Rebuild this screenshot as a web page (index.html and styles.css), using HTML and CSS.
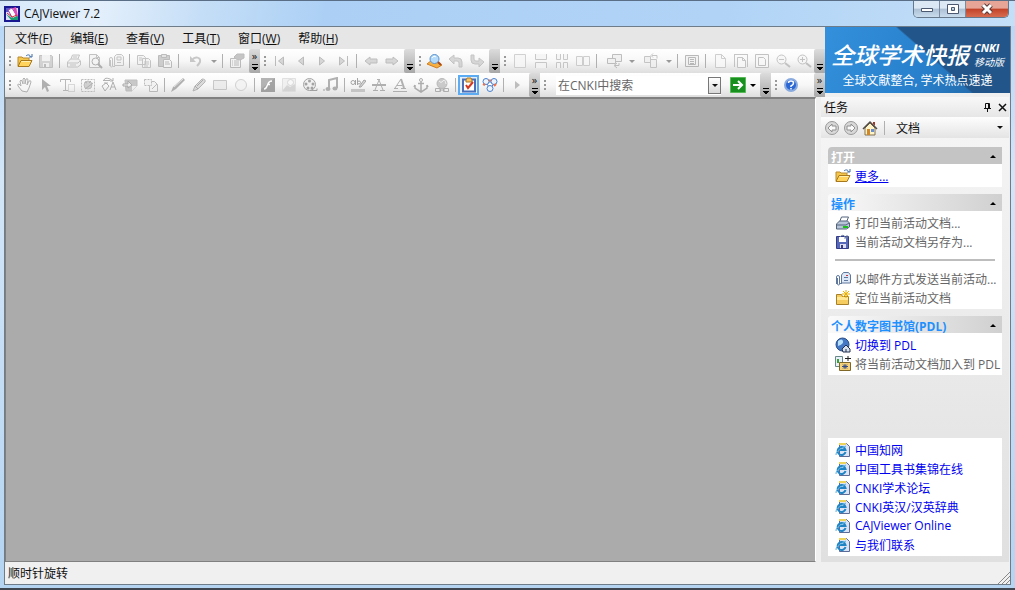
FILE: index.html
```html
<!DOCTYPE html>
<html lang="zh-CN">
<head>
    <meta charset="UTF-8">
    <meta name="viewport" content="width=device-width, initial-scale=1.0">
    <title>CAJViewer 7.2</title>
    <link rel="stylesheet" href="styles.css">
</head>
<body>
    <!-- icon sprite -->
    <svg class="sprite" aria-hidden="true">
        <symbol id="open" viewBox="0 0 16 16"><path d="M1 13V4h4l1 1h6v3" fill="#f4c64c" stroke="#b8882c"/><path d="M1 13.500L4 7.500h11l-3 6z" fill="#ffd35c" stroke="#a8781c"/><path d="M4.500 8.500h9" stroke="#fff0b0"/><path d="M9 3c2-2 4-1 5 1m1-3v3h-3" fill="none" stroke="#3c6ca8"/></symbol>
        <symbol id="save" viewBox="0 0 16 16"><path d="M1.500 2.500h12l1 1v11h-13z" fill="#c8c8c8" stroke="#b0b0b0"/><path d="M4 2h8v6H4z" fill="#f0f0f0"/><path d="M5 10h6v4H5z" fill="#eee"/><path d="M6 11h2v3H6z" fill="#aaa"/></symbol>
        <symbol id="print" viewBox="0 0 16 16" fill="#eee" stroke="#b4b4b4"><path d="M4.500 7l2-5h7l-2 5"/><path d="M1.500 9l3-3h8l2 2v4l-3 2h-10z"/><path d="M2 10h10l2-2M4 12h6" fill="none"/><path d="M7 4h4"/></symbol>
        <symbol id="preview" viewBox="0 0 16 16" fill="#f4f4f4" stroke="#b0b0b0"><path d="M2.500 1.500h7l3 3v10h-10z"/><path d="M9.500 1.500v3h3" fill="none"/><circle cx="8.500" cy="8.500" r="3.500" stroke="#999"/><path d="M11 11l4 4" stroke-width="2" stroke="#999"/></symbol>
        <symbol id="mail" viewBox="0 0 16 16" fill="#f0f0f0" stroke="#b4b4b4"><path d="M6.500 3.500l2-2h5l2 2v9h-9z"/><path d="M9 4h4v3H9zM9 9.500h4"/><path d="M1.500 13V6a1.500 1.500 0 0 1 3 0v7a1 1 0 0 1-2 0V7M5 13.500h2" fill="none"/></symbol>
        <symbol id="copy" viewBox="0 0 16 16" fill="#f2f2f2" stroke="#b4b4b4"><path d="M1.500 2.500h6l2 2v7h-8zM6.500 5.500h6l2 2v7h-8z"/><path d="M3 5h3M3 7h3M8 9h5M8 11h5M8 13h4"/></symbol>
        <symbol id="paste" viewBox="0 0 16 16" stroke="#a8a8a8"><path d="M1.500 2.500h11v11h-11z" fill="#c0c0c0"/><path d="M4.500 1.500h5v3h-5z" fill="#ddd"/><path d="M6.500 6.500h6l2 2v6h-8z" fill="#f4f4f4"/><path d="M8 9h4M8 11h5"/></symbol>
        <symbol id="undo" viewBox="0 0 16 16"><path d="M4 7c3-4 9-3 8 2-1 2-2 3-3 4" fill="none" stroke="#b8b8b8" stroke-width="2"/><path d="M2 3v6h6z" fill="#b8b8b8"/></symbol>
        <symbol id="props" viewBox="0 0 16 16" stroke="#a8a8a8" fill="#f2f2f2"><path d="M1.500 5.500h10v9h-10z"/><path d="M3 8h1M5 8h5M3 10h1M5 10h5M3 12h1M5 12h5"/><path d="M5 4l3-3h7v4l-4 2-4-1z" fill="#b4b4b4"/></symbol>
        <symbol id="first" viewBox="0 0 16 16" fill="#ccc" stroke="#a8a8a8"><path d="M3.500 3v10"/><path d="M11.500 4v8l-5-4z"/></symbol>
        <symbol id="prev" viewBox="0 0 16 16" fill="#ccc" stroke="#a8a8a8"><path d="M10.500 4v8l-5-4z"/></symbol>
        <symbol id="next" viewBox="0 0 16 16" fill="#ccc" stroke="#a8a8a8"><path d="M5.500 4v8l5-4z"/></symbol>
        <symbol id="last" viewBox="0 0 16 16" fill="#ccc" stroke="#a8a8a8"><path d="M12.500 3v10"/><path d="M4.500 4v8l5-4z"/></symbol>
        <symbol id="back" viewBox="0 0 16 16"><path d="M2 8l5-4v2h7v4H7v2z" fill="#ccc" stroke="#aaa"/></symbol>
        <symbol id="forward" viewBox="0 0 16 16"><path d="M14 8L9 4v2H2v4h7v2z" fill="#ccc" stroke="#aaa"/></symbol>
        <symbol id="find" viewBox="0 0 16 16"><path d="M0 11l5-4 10 5-5 3z" fill="#f6b040" stroke="#d07c20"/><circle cx="7.500" cy="6" r="4.500" fill="#b4dcfa" stroke="#5c90cc"/><path d="M5 5c1-2 3-2 4-1" stroke="#fff" fill="none"/><path d="M11 9l3 3" stroke="#a84c20" stroke-width="2"/></symbol>
        <symbol id="turnleft" viewBox="0 0 16 16"><path d="M1 6l5-4v3h4q4 0 4 4v5h-3V10q0-2-2-2H6v3z" fill="#ccc" stroke="#b4b4b4"/></symbol>
        <symbol id="turnright" viewBox="0 0 16 16"><path d="M2 2h3v4q0 2 2 2h3V5l5 4-5 5v-3H6q-4 0-4-4z" fill="#ccc" stroke="#b4b4b4"/></symbol>
        <symbol id="p1" viewBox="0 0 16 16"><path d="M2.500 1.500h11v13h-11z" fill="#f6f6f6" stroke="#c4c4c4"/></symbol>
        <symbol id="p2" viewBox="0 0 16 16"><path d="M2.500 1v5.500h11V1M2.500 15V9.500h11V15" fill="#f4f4f4" stroke="#b8b8b8"/></symbol>
        <symbol id="p3" viewBox="0 0 16 16"><path d="M2.500 1v5.500h4V1M9.500 1v5.500h4V1M2.500 15V9.500h4V15M9.500 15V9.500h4V15" fill="#f4f4f4" stroke="#b8b8b8"/></symbol>
        <symbol id="p4" viewBox="0 0 16 16"><path d="M1.500 3.500h6v9h-6zM8.500 3.500h6v9h-6z" fill="#f6f6f6" stroke="#c0c0c0"/></symbol>
        <symbol id="rotate" viewBox="0 0 16 16" fill="#eee" stroke="#aaa"><path d="M6.500 1.500h9v7h-9z"/><path d="M1.500 5.500h8v5h-8z"/><path d="M9 12.500h4V10M11 10l-3 2.500L11 15" fill="none"/></symbol>
        <symbol id="rotate2" viewBox="0 0 16 16" fill="#eee" stroke="#b4b4b4"><path d="M1.500 3.500h6v6h-6zM7.500 6.500h6v8h-6z"/><path d="M9 2.500h5v3M10 .500l-2 2 2 2" fill="none"/></symbol>
        <symbol id="screen" viewBox="0 0 16 16" fill="#f0f0f0" stroke="#a4a4a4"><path d="M1.500 2.500h13v11h-13zM4.500 4.500h7v7h-7zM6 6.500h4M6 8.500h4M6 10.500h4"/></symbol>
        <symbol id="page" viewBox="0 0 16 16"><path d="M3.500 1.500h6l4 4v9h-10zM9.500 1.500v4h4" fill="#f8f8f8" stroke="#bfbfbf"/></symbol>
        <symbol id="pagew" viewBox="0 0 16 16" fill="#f8f8f8" stroke="#b4b4b4"><path d="M1.500 1v13M14.500 1v13M2 1.500h12M4.500 4.500h5l3 3v7h-8zM9.500 4.500v3h3"/></symbol>
        <symbol id="pagef" viewBox="0 0 16 16" fill="#f8f8f8" stroke="#b0b0b0"><path d="M1.500 1.500h13v13h-13zM4.500 4.500h5l2 2v6h-7z"/></symbol>
        <symbol id="zoomout" viewBox="0 0 16 16" fill="#f6f6f6" stroke="#b4b4b4"><circle cx="6.500" cy="6.500" r="4.500"/><path d="M4 6.500h5"/><path d="M10 10l5 4" stroke-width="2"/></symbol>
        <symbol id="zoomin" viewBox="0 0 16 16" fill="#f6f6f6" stroke="#b0b0b0"><circle cx="6.500" cy="6.500" r="4.500"/><path d="M4 6.500h5M6.500 4v5"/><path d="M10 10l5 4" stroke-width="2"/></symbol>
        <symbol id="hand" viewBox="0 0 16 16"><path d="M5 14L1 9q-1-2 1-2l2 2-1-5q1-2 2 0l1 3V2q1-2 2 0v5l1-5q2-1 2 1l-1 5 2-4q2-1 2 1l-2 6-2 4z" fill="#f6f6f6" stroke="#999"/></symbol>
        <symbol id="cursor" viewBox="0 0 16 16"><path d="M4 2v11l3-3 2 5 2-1-2-5h4z" fill="#999"/></symbol>
        <symbol id="textsel" viewBox="0 0 16 16" fill="none" stroke="#a4a4a4"><path d="M1.500 5V2.500h10V5M6.500 3v11M4 13.500h5"/><path d="M9.500 7.500h6v7h-6z" stroke-dasharray="1 1"/></symbol>
        <symbol id="imgsel" viewBox="0 0 16 16"><path d="M1.500 2.500h13v12h-13z" fill="none" stroke="#aaa" stroke-dasharray="2 1"/><circle cx="8" cy="8" r="4" fill="#c4c4c4" stroke="#aaa"/><path d="M5 5l2 1M9 6l2-2M5 12l8-6" stroke="#999"/></symbol>
        <symbol id="ocr" viewBox="0 0 16 16" fill="none" stroke="#999"><path d="M2 3.500h7M3 3q1-3 6-1l3 2M12 1v3H9M3 6h4M1 9l4-3 3 3-4 5zM9 13l3-8 3 8M10 10h4"/></symbol>
        <symbol id="note" viewBox="0 0 16 16"><path d="M3 3h12v6l-5 5H4z" fill="#b8b8b8" stroke="#aaa"/><path d="M10 14v-5h5" fill="#eee"/><path d="M1 7h5V4l4 4-4 3V9H1z" fill="#eee" stroke="#909090"/></symbol>
        <symbol id="region" viewBox="0 0 16 16" fill="#f0f0f0" stroke="#a8a8a8"><path d="M6.500 4.500h5l3 3v7h-8z"/><path d="M1.500 2.500h7v6h-7z" stroke-dasharray="2 1"/><path d="M9 12l5-5"/></symbol>
        <symbol id="pencil" viewBox="0 0 16 16"><path d="M1 15l2-5 10-9 2 2-9 9z" fill="#999"/><path d="M4 10l9-8" stroke="#ddd"/></symbol>
        <symbol id="marker" viewBox="0 0 16 16"><path d="M2 14l2-5 7-7q4 0 3 3l-7 7z" fill="#d0d0d0" stroke="#a0a0a0"/><path d="M4 9l3 3M6 9l6-6" stroke="#909090"/></symbol>
        <symbol id="rect" viewBox="0 0 16 16"><path d="M1.500 3.500h13v9h-13z" fill="#e8e8e8" stroke="#b8b8b8"/></symbol>
        <symbol id="circle" viewBox="0 0 16 16"><circle cx="8" cy="8" r="5.500" fill="#f2f2f2" stroke="#c4c4c4"/></symbol>
        <symbol id="flash" viewBox="0 0 16 16"><path d="M1 1h14v14H1z" fill="#888"/><path d="M1 1h14L1 12z" fill="#9c9c9c"/><path d="M12 4q-3 0-4 3l-1 2q-1 3-3 3M7 7.500h3" stroke="#fff" stroke-width="1.500" fill="none"/></symbol>
        <symbol id="picture" viewBox="0 0 16 16"><path d="M1.500 1.500h13v13h-13z" fill="#eee" stroke="#d8d8d8"/><path d="M2 13l4-5 3 2 5-3v7H2z" fill="#ccc"/><circle cx="9.500" cy="5.500" r="3" fill="#f8f8f8" stroke="#ccc"/></symbol>
        <symbol id="reel" viewBox="0 0 16 16"><circle cx="7.500" cy="7.500" r="6" fill="#eee" stroke="#888"/><g fill="#888"><circle cx="7.500" cy="4" r="1.500"/><circle cx="4" cy="7" r="1.500"/><circle cx="11" cy="7" r="1.500"/><circle cx="6" cy="11" r="1.500"/><circle cx="10" cy="11" r="1.500"/></g><path d="M8 13.500h7v-2" stroke="#888" fill="none"/></symbol>
        <symbol id="music" viewBox="0 0 16 16"><path d="M6 12V3l8-2v10" fill="none" stroke="#999" stroke-width="2"/><ellipse cx="5" cy="12" rx="2.500" ry="2" fill="#999"/><ellipse cx="12" cy="11.500" rx="2.500" ry="2" fill="#999"/><path d="M1 12v2" stroke="#888"/></symbol>
        <symbol id="abmark" viewBox="0 0 16 16" fill="none" stroke="#888"><circle cx="3" cy="5.500" r="2"/><path d="M5.500 3v5M7.500 1v7"/><circle cx="9" cy="5.500" r="1.500"/><path d="M9 10l5-7 2 1-5 6z" fill="#ccc"/><path d="M1 13.500h14" stroke-width="3" stroke="#b8b8b8"/></symbol>
        <symbol id="strike" viewBox="0 0 16 16" fill="none" stroke="#999"><path d="M4 13L8 3l4 10M2 13.500h5M9 13.500h5M6 2.500h3"/><path d="M1 8h14" stroke-width="2"/></symbol>
        <symbol id="underline" viewBox="0 0 16 16" fill="none" stroke="#999"><path d="M3 11l6-9"/><path d="M9 2l3 9" stroke-width="2"/><path d="M5 8.500h5M2 11.500h4M9 11.500h5M1 14.500h14"/></symbol>
        <symbol id="anchor" viewBox="0 0 16 16" fill="none" stroke="#949494"><circle cx="8" cy="3" r="1.500"/><path d="M8 5v9M5 6.500h6M2 8v3l6 4 6-4V8M2 8l-1 2M14 8l1 2" stroke-width="1.500"/></symbol>
        <symbol id="link" viewBox="0 0 16 16"><circle cx="8" cy="6.500" r="5" fill="#bbb" stroke="#a4a4a4"/><path d="M5 4q2 3 4 0t3 3" stroke="#eee" fill="none"/><path d="M1.500 11.500h5v3h-5zM9.500 11.500h5v3h-5zM5 13h6" fill="#eee" stroke="#999"/></symbol>
        <symbol id="task" viewBox="0 0 16 16"><path d="M2 2.500h12v12H2z" fill="#fff" stroke="#4c70b8" stroke-width="2"/><path d="M5 3l1-2h4l1 2v2H5z" fill="#f8c468" stroke="#a87828"/><path d="M5 8l2 3 5-6" stroke="#d43820" stroke-width="2" fill="none"/></symbol>
        <symbol id="users" viewBox="0 0 16 16" fill="#eaf4ff" stroke="#4c80cc"><path d="M4 5l4 7 5-7z" fill="#fff"/><circle cx="4" cy="4.500" r="3"/><circle cx="12" cy="4.500" r="3"/><circle cx="8" cy="11.500" r="3"/><path d="M7 3.500h2M1 7l2 1M14 7l-2 2" stroke="#f07048" stroke-width="2"/></symbol>
        <symbol id="play" viewBox="0 0 16 16"><path d="M6 4v8l5-4z" fill="#aaa"/></symbol>
        <symbol id="go" viewBox="0 0 16 16"><path d="M.500.500h15v15H.500z" fill="#189020" stroke="#58b858"/><path d="M3 8h9M8 4l4 4-4 4" fill="none" stroke="#fff" stroke-width="2"/></symbol>
        <symbol id="help" viewBox="0 0 16 16"><circle cx="8" cy="8" r="6" fill="#2c68d4" stroke="#88aade" stroke-width="2"/><path d="M5.500 6q0-2 2.500-2t2.500 2-2.500 3v1M8 11v1.500" stroke="#fff" stroke-width="1.500" fill="none"/></symbol>
        <symbol id="cback" viewBox="0 0 16 16"><circle cx="8" cy="8" r="6.500" fill="#d8d8d8" stroke="#999"/><path d="M4 8l4-4v2h4v4H8v2z" fill="#fafafa" stroke="#909090"/></symbol>
        <symbol id="cforward" viewBox="0 0 16 16"><circle cx="8" cy="8" r="6.500" fill="#d8d8d8" stroke="#999"/><path d="M12 8L8 4v2H4v4h4v2z" fill="#fafafa" stroke="#909090"/></symbol>
        <symbol id="home" viewBox="0 0 16 16"><path d="M3 8l5-5 5 5v7H3z" fill="#fff4c8" stroke="#807050"/><path d="M1 9l7-7 7 7" fill="none" stroke="#504c48" stroke-width="1.500"/><path d="M11 2h2v4l-2-2z" fill="#a03828"/><path d="M5 9h3v6H5z" fill="#d08828"/><path d="M9 9h3v3H9z" fill="#6890d0"/></symbol>
        <symbol id="printc" viewBox="0 0 16 16" stroke="#53637c"><path d="M4.500 7l2-5h7l-2 5" fill="#fff"/><path d="M1.500 9l3-3h8l2 2v4l-3 2h-10z" fill="#b8c4d8"/><path d="M2 10h9l3-2" fill="none"/><path d="M8 12h5" stroke="#18c018" stroke-width="2"/></symbol>
        <symbol id="savec" viewBox="0 0 16 16"><path d="M1.500 2.500h12v12h-12z" fill="#5868b8" stroke="#343c88"/><path d="M4 3h7v5H4z" fill="#fff"/><path d="M5 10h6v4H5z" fill="#dde"/><path d="M6 11h2v3H6z" fill="#343c88"/><path d="M5 3q3-4 6 1M12 1v3H9" stroke="#7080a8" fill="none"/></symbol>
        <symbol id="mailc" viewBox="0 0 16 16" fill="#dce8f8" stroke="#60789c"><path d="M6.500 4l2-2.500h5l2 2.500v8h-9z"/><path d="M9 6.500h4M9 9.500h4"/><path d="M1.500 13V6a1.500 1.500 0 0 1 3 0v7a1 1 0 0 1-2 0V7M5 12.500h2" fill="none"/><path d="M11 4.500h2" stroke="#c83838"/></symbol>
        <symbol id="locate" viewBox="0 0 16 16"><path d="M1.500 14.500v-10h5l1 2h6v8z" fill="#f4cc60" stroke="#a88028"/><path d="M2 7h11v3H2z" fill="#ffe898"/><path d="M11 0v8M7 4h8M8 1l6 6M14 1L8 7" stroke="#e8b000"/></symbol>
        <symbol id="globe" viewBox="0 0 16 16"><circle cx="7.500" cy="7.500" r="6.500" fill="#4478c4" stroke="#284c88"/><path d="M3 4q4-3 5 0T3 9z" fill="#b8e0f8"/><path d="M7 12l4-4 4 4v3H8z" fill="#d8e0ec" stroke="#203050"/><path d="M11 12v3" stroke="#203050"/></symbol>
        <symbol id="addlib" viewBox="0 0 16 16"><path d="M.500.500h7v10h-7z" fill="#e8f0f8" stroke="#688"/><path d="M2 3h2v4H2z" fill="#38a038"/><path d="M4.500 6.500h11v8h-11z" fill="#f8d478" stroke="#806828"/><path d="M10 8v5M7 10.500h6M8 8.500l4 4M12 8.500l-4 4" stroke="#334c88"/><path d="M13 0v5M10 2.500h6" stroke="#222"/></symbol>
        <symbol id="ie" viewBox="0 0 16 16"><path d="M4.500 1.500h7l3 3v10h-10z" fill="#dce4f4" stroke="#5c6c98"/><path d="M4 2h7" stroke="#ecd45c" stroke-width="2"/><path d="M10.500 10A4 4 0 1 1 10.500 8H4" fill="none" stroke="#2084c4" stroke-width="2"/><path d="M1 13Q0 9 11 4" fill="none" stroke="#58b0e0"/></symbol>
    </svg>

    <div class="window">
        <header class="titlebar">
            <svg class="app-icon" viewBox="0 0 16 16" aria-hidden="true"><path d="M1 1h14v14H1z" fill="#e0e0f8" stroke="#181890" stroke-width="2"/><path d="M2 2h4v4H2z" fill="#5858c8"/><path d="M4 4l4-2 5 8-4 3z" fill="#fff" stroke="#a040b0"/><path d="M9 2l3-1 2 9-2 1z" fill="#e048b8"/><path d="M2 8l6 4 6-2v4H7z" fill="#18a070"/><path d="M3 7l5 4 5-2" stroke="#d03030" fill="none"/></svg>
            <h1 class="title">CAJViewer 7.2</h1>
            <div class="caption-buttons">
                <button class="caption-btn" aria-label="最小化"><svg viewBox="0 0 16 16"><path d="M2.500 7.500h11v3h-11z" fill="#fff" stroke="#4c5870"/></svg></button>
                <button class="caption-btn" aria-label="最大化"><svg viewBox="0 0 16 16"><path d="M2.500 3.500h11v9h-11zM6.500 6.500h3v3h-3z" fill="#fff" fill-rule="evenodd" stroke="#4c5870"/></svg></button>
                <button class="caption-btn close" aria-label="关闭"><svg viewBox="0 0 16 16"><path d="M4 4l8 8M12 4l-8 8" stroke="#5c3838" stroke-width="5"/><path d="M4 4l8 8M12 4l-8 8" stroke="#fff" stroke-width="3"/></svg></button>
            </div>
        </header>

        <div class="client">
            <div class="top">
                <div class="bars">
                    <nav class="menubar">
                        <button>文件(<u>F</u>)</button>
                        <button>编辑(<u>E</u>)</button>
                        <button>查看(<u>V</u>)</button>
                        <button>工具(<u>T</u>)</button>
                        <button>窗口(<u>W</u>)</button>
                        <button>帮助(<u>H</u>)</button>
                    </nav>

                    <div class="toolbar">
                        <span class="grip"></span>
                        <button class="tool on" aria-label="打开"><svg><use href="#open"/></svg></button>
                        <button class="tool" aria-label="保存"><svg><use href="#save"/></svg></button>
                        <span class="sep"></span>
                        <button class="tool" aria-label="打印"><svg><use href="#print"/></svg></button>
                        <button class="tool" aria-label="打印预览"><svg><use href="#preview"/></svg></button>
                        <button class="tool" aria-label="发送邮件"><svg><use href="#mail"/></svg></button>
                        <span class="sep"></span>
                        <button class="tool" aria-label="复制"><svg><use href="#copy"/></svg></button>
                        <button class="tool" aria-label="粘贴"><svg><use href="#paste"/></svg></button>
                        <span class="sep"></span>
                        <button class="tool split" aria-label="撤销"><svg><use href="#undo"/></svg></button>
                        <button class="drop" aria-label="撤销列表"></button>
                        <span class="sep"></span>
                        <button class="tool" aria-label="属性"><svg><use href="#props"/></svg></button>
                        <button class="more double" aria-label="更多按钮"></button>

                        <span class="grip"></span>
                        <button class="tool" aria-label="第一页"><svg><use href="#first"/></svg></button>
                        <button class="tool" aria-label="上一页"><svg><use href="#prev"/></svg></button>
                        <button class="tool" aria-label="下一页"><svg><use href="#next"/></svg></button>
                        <button class="tool" aria-label="最后一页"><svg><use href="#last"/></svg></button>
                        <span class="sep"></span>
                        <button class="tool" aria-label="后退"><svg><use href="#back"/></svg></button>
                        <button class="tool" aria-label="前进"><svg><use href="#forward"/></svg></button>
                        <button class="more" aria-label="更多按钮"></button>

                        <span class="grip"></span>
                        <button class="tool on" aria-label="查找"><svg><use href="#find"/></svg></button>
                        <button class="tool" aria-label="查找上一个"><svg><use href="#turnleft"/></svg></button>
                        <button class="tool" aria-label="查找下一个"><svg><use href="#turnright"/></svg></button>
                        <button class="more" aria-label="更多按钮"></button>

                        <span class="grip"></span>
                        <button class="tool" aria-label="单页"><svg><use href="#p1"/></svg></button>
                        <button class="tool" aria-label="连续"><svg><use href="#p2"/></svg></button>
                        <button class="tool" aria-label="连续对开"><svg><use href="#p3"/></svg></button>
                        <button class="tool" aria-label="对开"><svg><use href="#p4"/></svg></button>
                        <span class="sep"></span>
                        <button class="tool split" aria-label="旋转"><svg><use href="#rotate"/></svg></button>
                        <button class="drop" aria-label="旋转选项"></button>
                        <button class="tool split" aria-label="全部旋转"><svg><use href="#rotate2"/></svg></button>
                        <button class="drop" aria-label="全部旋转选项"></button>
                        <span class="sep"></span>
                        <button class="tool" aria-label="全屏"><svg><use href="#screen"/></svg></button>
                        <span class="sep"></span>
                        <button class="tool" aria-label="实际大小"><svg><use href="#page"/></svg></button>
                        <button class="tool" aria-label="适合宽度"><svg><use href="#pagew"/></svg></button>
                        <button class="tool" aria-label="适合页面"><svg><use href="#pagef"/></svg></button>
                        <button class="tool" aria-label="缩小"><svg><use href="#zoomout"/></svg></button>
                        <button class="tool" aria-label="放大"><svg><use href="#zoomin"/></svg></button>
                        <button class="more end" aria-label="更多按钮"></button>
                    </div>

                    <div class="toolbar edit">
                        <span class="grip"></span>
                        <button class="tool" aria-label="手形"><svg><use href="#hand"/></svg></button>
                        <button class="tool" aria-label="选择"><svg><use href="#cursor"/></svg></button>
                        <button class="tool" aria-label="选择文本"><svg><use href="#textsel"/></svg></button>
                        <button class="tool" aria-label="选择图像"><svg><use href="#imgsel"/></svg></button>
                        <button class="tool" aria-label="文字识别"><svg><use href="#ocr"/></svg></button>
                        <button class="tool" aria-label="注释"><svg><use href="#note"/></svg></button>
                        <button class="tool" aria-label="区域"><svg><use href="#region"/></svg></button>
                        <span class="sep"></span>
                        <button class="tool" aria-label="直线"><svg><use href="#pencil"/></svg></button>
                        <button class="tool" aria-label="曲线"><svg><use href="#marker"/></svg></button>
                        <button class="tool" aria-label="矩形"><svg><use href="#rect"/></svg></button>
                        <button class="tool" aria-label="椭圆"><svg><use href="#circle"/></svg></button>
                        <span class="sep"></span>
                        <button class="tool" aria-label="Flash"><svg><use href="#flash"/></svg></button>
                        <button class="tool" aria-label="图片"><svg><use href="#picture"/></svg></button>
                        <button class="tool" aria-label="视频"><svg><use href="#reel"/></svg></button>
                        <button class="tool" aria-label="音乐"><svg><use href="#music"/></svg></button>
                        <span class="sep"></span>
                        <button class="tool" aria-label="高亮"><svg><use href="#abmark"/></svg></button>
                        <button class="tool" aria-label="删除线"><svg><use href="#strike"/></svg></button>
                        <button class="tool" aria-label="下划线"><svg><use href="#underline"/></svg></button>
                        <button class="tool" aria-label="书签"><svg><use href="#anchor"/></svg></button>
                        <button class="tool" aria-label="链接"><svg><use href="#link"/></svg></button>
                        <span class="sep"></span>
                        <button class="tool on active" aria-label="任务窗格"><svg><use href="#task"/></svg></button>
                        <button class="tool on" aria-label="知识元"><svg><use href="#users"/></svg></button>
                        <span class="sep"></span>
                        <button class="tool" aria-label="播放"><svg><use href="#play"/></svg></button>
                        <button class="more double" aria-label="更多按钮"></button>

                        <span class="grip"></span>
                        <form class="search">
                            <input type="text" aria-label="在CNKI中搜索" value="在CNKI中搜索">
                            <button type="button" class="search-drop" aria-label="搜索记录"></button>
                        </form>
                        <button class="tool on" aria-label="搜索"><svg><use href="#go"/></svg></button>
                        <button class="drop dark" aria-label="搜索选项"></button>
                        <button class="more" aria-label="更多按钮"></button>

                        <span class="grip"></span>
                        <button class="tool on" aria-label="帮助"><svg><use href="#help"/></svg></button>
                        <button class="more double end" aria-label="更多按钮"></button>
                    </div>
                </div>

                <a class="banner" href="#">
                    <span class="banner-head">
                        <strong>全球学术快报</strong>
                        <span class="brand"><b>CNKI</b><i>移动版</i></span>
                    </span>
                    <span class="banner-sub">全球文献整合, 学术热点速递</span>
                </a>
            </div>

            <div class="middle">
                <main class="workspace"></main>

                <aside class="taskpane">
                    <div class="pane-title">
                        <h2>任务</h2>
                        <button class="pane-btn" aria-label="固定"><svg viewBox="0 0 9 9"><path d="M2.500 5V.500h4V5M1 5.500h7M4.500 6v3M5.500 1v4" fill="none" stroke="#111"/></svg></button>
                        <button class="pane-btn" aria-label="关闭"><svg viewBox="0 0 9 9"><path d="M1 1l7 7M8 1L1 8" stroke="#111" stroke-width="1.500"/></svg></button>
                    </div>
                    <div class="pane-nav">
                        <button aria-label="后退"><svg><use href="#cback"/></svg></button>
                        <button aria-label="前进"><svg><use href="#cforward"/></svg></button>
                        <button aria-label="主页"><svg><use href="#home"/></svg></button>
                        <span class="sep"></span>
                        <button class="pane-select">文档</button>
                    </div>

                    <div class="pane-body">
                        <section class="card dim">
                            <h3>打开</h3>
                            <ul>
                                <li><svg><use href="#open"/></svg><a class="hover" href="#">更多...</a></li>
                            </ul>
                        </section>
                        <section class="card">
                            <h3>操作</h3>
                            <ul>
                                <li><svg><use href="#printc"/></svg><span>打印当前活动文档...</span></li>
                                <li><svg><use href="#savec"/></svg><span>当前活动文档另存为...</span></li>
                            </ul>
                            <hr>
                            <ul>
                                <li><svg><use href="#mailc"/></svg><span>以邮件方式发送当前活动...</span></li>
                                <li><svg><use href="#locate"/></svg><span>定位当前活动文档</span></li>
                            </ul>
                        </section>
                        <section class="card">
                            <h3>个人数字图书馆(PDL)</h3>
                            <ul>
                                <li><svg><use href="#globe"/></svg><a href="#">切换到 PDL</a></li>
                                <li><svg><use href="#addlib"/></svg><span>将当前活动文档加入到 PDL</span></li>
                            </ul>
                        </section>
                        <section class="card links">
                            <ul>
                                <li><svg><use href="#ie"/></svg><a href="#">中国知网</a></li>
                                <li><svg><use href="#ie"/></svg><a href="#">中国工具书集锦在线</a></li>
                                <li><svg><use href="#ie"/></svg><a href="#">CNKI学术论坛</a></li>
                                <li><svg><use href="#ie"/></svg><a href="#">CNKI英汉/汉英辞典</a></li>
                                <li><svg><use href="#ie"/></svg><a href="#">CAJViewer Online</a></li>
                                <li><svg><use href="#ie"/></svg><a href="#">与我们联系</a></li>
                            </ul>
                        </section>
                    </div>
                </aside>
            </div>

            <footer class="statusbar">
                <span>顺时针旋转</span>
                <svg class="resize" viewBox="0 0 12 12" aria-hidden="true"><path d="M0 12L12 0M4 12l8-8M8 12l4-4" stroke="#888"/></svg>
            </footer>
        </div>
    </div>
</body>
</html>
```
FILE: styles.css
```css
* {
    box-sizing: border-box;
}
body {
    margin: 0;
    font-family: "Open Sans", "Noto Sans CJK SC", sans-serif;
    font-size: 12px;
    color: #111;
}
button, input {
    font: inherit;
    color: inherit;
    padding: 0;
    border: none;
    background: none;
}
h1, h2, h3, ul {
    margin: 0;
    padding: 0;
    font-size: 12px;
    font-weight: normal;
    list-style: none;
}
svg {
    display: block;
    width: 16px;
    height: 16px;
    flex: none;
}
.sprite {
    display: none;
}

/* window frame */
.window {
    display: flex;
    flex-direction: column;
    height: 100vh;
    padding: 0 4px 3px;
    background: linear-gradient(#b5d6f6, #d3e6f8 30%, #b4d4f2);
    border-top: 1px solid #5a6f86;
    border-bottom: 2px solid #3f4650;
}
.titlebar {
    display: flex;
    align-items: center;
    height: 25px;
    flex: none;
    margin: 0 -4px;
    padding: 0 6px 0 4px;
    background: linear-gradient(100deg, #d8e9fa 0, #e3effb 10%, #c5def7 20%, #acd0f5 32%, #b0d3f6 70%, #c4dff8);
}
.title {
    flex: 1;
    padding-left: 4px;
}
.caption-buttons {
    display: flex;
    align-self: flex-start;
    border: 1px solid #66788c;
    border-top: none;
    border-radius: 0 0 5px 5px;
    overflow: hidden;
}
.caption-btn {
    display: flex;
    align-items: center;
    justify-content: center;
    width: 26px;
    height: 16px;
    background: linear-gradient(#dce8f4 45%, #adc0d4 50%, #c8dcee);
    border-right: 1px solid #7c8ca0;
}
.caption-btn.close {
    width: 42px;
    border: none;
    background: linear-gradient(#e6a596 45%, #c14329 50%, #d86c50);
}

/* client area */
.client {
    flex: 1;
    min-height: 0;
    display: flex;
    flex-direction: column;
    background: #f0f0f0;
    border: 1px solid #6e7c8a;
}
.top {
    display: flex;
    background: #f0f0f0;
}
.bars {
    flex: 1;
    min-width: 0;
}
.menubar {
    display: flex;
    gap: 18px;
    align-items: center;
    height: 22px;
    padding-left: 10px;
    background: #e6e6e6;
}
.toolbar {
    display: flex;
    align-items: center;
    height: 24px;
    background: linear-gradient(#fff, #f7f7f7 50%, #dedede);
}
.grip {
    width: 9px;
    height: 12px;
    flex: none;
    background: radial-gradient(circle at 5px 2px, #999 1px, transparent 1px) 0 0 / 9px 4px;
}
.tool {
    display: flex;
    align-items: center;
    justify-content: center;
    width: 21px;
    height: 20px;
    flex: none;
}
.tool svg {
    opacity: 0.75;
}
.tool.on svg {
    opacity: 1;
}
.tool.split {
    width: 27px;
}
.tool.active {
    background: #e4effa;
    border: 2px solid #5cacf4;
}
.sep {
    width: 7px;
    height: 14px;
    flex: none;
    background: linear-gradient(#b0b0b0, #b0b0b0) center / 1px 100% no-repeat;
}
.edit .sep {
    width: 6px;
}
.drop {
    display: flex;
    align-items: center;
    justify-content: center;
    width: 10px;
    height: 20px;
    flex: none;
    color: #999;
}
.drop::after, .search-drop::after, .pane-select::after {
    content: "";
    flex: none;
    border: 3px solid transparent;
    border-top-color: currentColor;
    border-bottom: none;
}
.drop.dark {
    color: #000;
}
.more {
    display: flex;
    flex-direction: column;
    align-items: center;
    justify-content: flex-end;
    align-self: stretch;
    width: 11px;
    margin-left: 2px;
    padding-bottom: 3px;
    flex: none;
    background: linear-gradient(#dcdcdc, #a8a8a8);
    border-radius: 2px 0 0 2px;
}
.more::after {
    content: "";
    flex: none;
    width: 6px;
    height: 6px;
    background: linear-gradient(#000, #000) 0 0 / 6px 1px no-repeat,
        linear-gradient(#000, #000) 0 3px / 6px 1px no-repeat,
        linear-gradient(#000, #000) 1px 4px / 4px 1px no-repeat,
        linear-gradient(#000, #000) 2px 5px / 2px 1px no-repeat;
}
.more.double::before {
    content: "»";
    font-size: 11px;
    line-height: 8px;
    margin-bottom: 4px;
}
.more.end {
    margin-left: auto;
}
.search {
    display: flex;
    width: 165px;
    height: 19px;
    margin: 0 6px 0 7px;
    background: #fff;
}
.search input {
    flex: 1;
    min-width: 0;
    padding-left: 2px;
    color: #666;
}
.search-drop {
    display: flex;
    align-items: center;
    justify-content: center;
    width: 13px;
    margin: 1px 0;
    border: 1px solid #777;
    background: linear-gradient(#fff, #d8d8d8);
}

/* banner */
.banner {
    display: flex;
    flex-direction: column;
    align-items: center;
    justify-content: flex-end;
    width: 185px;
    height: 66px;
    flex: none;
    padding-bottom: 3px;
    color: #fff;
    text-decoration: none;
    background: linear-gradient(41deg, transparent 56%, #22568a 57%), linear-gradient(115deg, #3490dc, #2880cc 55%, #246cac 85%);
}
.banner-head {
    display: flex;
    align-items: center;
    gap: 5px;
}
.banner-head strong {
    font-size: 23px;
    line-height: 34px;
    font-style: italic;
    font-weight: 500;
}
.brand {
    display: flex;
    flex-direction: column;
    font-size: 10px;
    line-height: 15px;
    font-style: italic;
}
.brand b {
    font-size: 11px;
}
.banner-sub {
    line-height: 18px;
}

/* middle */
.middle {
    flex: 1;
    min-height: 0;
    display: flex;
    gap: 5px;
}
.workspace {
    flex: 1;
    background: #ababab;
    border: 1px solid #808080;
    border-top-width: 2px;
    border-right-color: #fff;
}
.taskpane {
    display: flex;
    flex-direction: column;
    width: 188px;
    flex: none;
    margin-right: 1px;
    background: #f8f8f8;
}
.pane-title {
    display: flex;
    align-items: center;
    gap: 6px;
    height: 20px;
    padding: 0 2px 0 3px;
    background: linear-gradient(#f8f8f8, #e6e6e6);
}
.pane-title h2 {
    flex: 1;
}
.pane-btn svg {
    width: 9px;
    height: 9px;
}
.pane-nav {
    display: flex;
    align-items: center;
    gap: 3px;
    height: 21px;
    padding-left: 3px;
    background: linear-gradient(#fdfdfd, #e4e4e4);
}
.pane-select {
    flex: 1;
    display: flex;
    align-items: center;
    justify-content: space-between;
    padding: 0 6px 0 5px;
}
.pane-body {
    flex: 1;
    display: flex;
    flex-direction: column;
    gap: 7px;
    padding: 9px 7px 6px;
    background: linear-gradient(#f4f4f4, #e0e0e0);
}
.card {
    background: #fff;
    padding-bottom: 2px;
    border-radius: 4px 0 0 0;
    overflow: hidden;
}
.card h3 {
    display: flex;
    align-items: center;
    justify-content: space-between;
    height: 17px;
    margin-bottom: 2px;
    padding: 2px 6px 0 3px;
    font-weight: bold;
    color: #1e90ff;
    background: linear-gradient(90deg, #fafafa, #d0d0d0);
}
.card h3::after {
    content: "";
    border: 3px solid transparent;
    border-bottom-color: #000;
    border-top: none;
}
.card.dim h3 {
    color: #fff;
    background: #c4c4c4;
}
.card li {
    display: flex;
    align-items: center;
    gap: 4px;
    height: 19px;
    padding-left: 7px;
    color: #666;
    white-space: nowrap;
}
.card a {
    color: #0000f0;
    text-decoration: none;
}
.card a.hover {
    text-decoration: underline;
}
.card hr {
    height: 2px;
    margin: 8px 7px;
    border: none;
    background: #bdbdbd;
}
.card.links {
    margin-top: auto;
    padding-top: 2px;
    border-radius: 0;
}

/* status bar */
.statusbar {
    display: flex;
    align-items: center;
    justify-content: space-between;
    height: 22px;
    flex: none;
    padding-left: 3px;
}
.resize {
    width: 12px;
    height: 12px;
    align-self: flex-end;
}
```
